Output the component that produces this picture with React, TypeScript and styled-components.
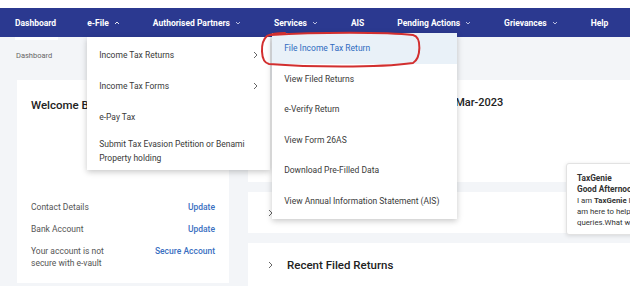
import styled, { createGlobalStyle } from 'styled-components'

const GlobalStyle = createGlobalStyle`
  body {
    margin: 0;
    font-family: Roboto, "Noto Sans", Arial, sans-serif;
    background: #ffffff;
    overflow: hidden;
  }
`

const Page = styled.div`
  position: relative;
  width: 630px;
  height: 286px;
  padding-top: 8px;
  box-sizing: border-box;
  overflow: hidden;
  background: #ffffff;
`

const Nav = styled.nav`
  display: flex;
  align-items: center;
  height: 29px;
  padding-left: 15px;
  gap: 33px;
  background: #2b3990;
`

const NavItem = styled.div<{ $active?: boolean; $tight?: boolean }>`
  position: relative;
  display: flex;
  align-items: center;
  height: 100%;
  margin-right: ${(p) => (p.$tight ? -2 : 0)}px;
  color: #ffffff;
  font-size: 8.5px;
  font-weight: 700;
  white-space: nowrap;

  &::after {
    content: '';
    display: ${(p) => (p.$active ? 'block' : 'none')};
    position: absolute;
    left: 0;
    right: -2px;
    bottom: -3px;
    height: 3px;
    background: #ffffff;
  }
`

const Caret = styled.svg`
  width: 6px;
  height: 4px;
  margin-left: 5px;
`

const Main = styled.main`
  height: 249px;
  padding-left: 17px;
  background: #f3f5f8;
`

const Breadcrumb = styled.div`
  padding-top: 14px;
  line-height: 10px;
  font-size: 7.5px;
  color: #666666;
  margin-left: -1px;
`

const Content = styled.div`
  display: grid;
  grid-template-columns: 212px 1fr;
  column-gap: 19px;
  margin-top: 19px;
`

const LeftCard = styled.section`
  display: flex;
  flex-direction: column;
  height: 203px;
  padding: 18px 14px 14px;
  box-sizing: border-box;
  background: #ffffff;
`

const Welcome = styled.h2`
  margin: 0;
  font-size: 11.5px;
  line-height: 14px;
  font-weight: 500;
  color: #222222;
`

const InfoList = styled.div`
  display: flex;
  flex-direction: column;
  gap: 10px;
  margin-top: auto;
`

const InfoRow = styled.div`
  display: flex;
  justify-content: space-between;
  font-size: 8.5px;
  line-height: 12px;
  color: #555555;
`

const InfoLabel = styled.span`
  max-width: 90px;
`

const InfoLink = styled.span`
  color: #3a6fc1;
  font-weight: 500;
`

const RightCol = styled.div`
  display: flex;
  flex-direction: column;
  gap: 10px;
`

const TopCard = styled.section`
  height: 102px;
  background: #ffffff;
  padding-top: 16px;
  box-sizing: border-box;
`

const LoginInfo = styled.div`
  margin-left: 134px;
  font-size: 11px;
  line-height: 14px;
  font-weight: 500;
  color: #222222;
`

const Card = styled.section<{ $grow?: boolean }>`
  flex: ${(p) => (p.$grow ? 1 : 'none')};
  background: #ffffff;
`

const CardHeader = styled.div<{ $h: number }>`
  display: flex;
  align-items: center;
  height: ${(p) => p.$h}px;
  padding-left: 20px;
`

const CardTitle = styled.h3`
  margin: 0 0 0 14px;
  font-size: 11.5px;
  font-weight: 500;
  color: #222222;
`

const Chevron = styled.svg`
  width: 5px;
  height: 8px;
`

const Dropdown = styled.div`
  position: absolute;
  top: 100%;
  left: 0;
  z-index: 5;
  width: 183px;
  padding: 2px 0 1px;
  background: #ffffff;
  box-shadow: 0 2px 6px rgba(0, 0, 0, 0.22);
  color: #3a3a3a;
  font-size: 8.5px;
  font-weight: 400;
`

const DropItem = styled.div<{ $tall?: boolean }>`
  display: flex;
  align-items: center;
  justify-content: space-between;
  height: ${(p) => (p.$tall ? 37 : 31)}px;
  padding: 0 12px;
  line-height: 14px;
  white-space: normal;
`

const SubMenu = styled.div`
  position: absolute;
  top: -4px;
  left: calc(100% + 2px);
  width: 185px;
  padding-bottom: 3px;
  background: #ffffff;
  box-shadow: 0 2px 6px rgba(0, 0, 0, 0.22);
`

const SubItem = styled.div<{ $active?: boolean }>`
  display: flex;
  align-items: center;
  height: 30.5px;
  padding: 0 12px;
  color: ${(p) => (p.$active ? '#2f6bbf' : '#3a3a3a')};
  background: ${(p) => (p.$active ? '#e9f1f8' : '#ffffff')};
  white-space: nowrap;
`

const Annotation = styled.svg`
  position: absolute;
  left: 257px;
  top: 30px;
  width: 170px;
  height: 40px;
  z-index: 6;
  pointer-events: none;
`

const Genie = styled.div`
  position: absolute;
  left: 566px;
  top: 163px;
  width: 150px;
  height: 72px;
  padding: 9px 10px;
  box-sizing: border-box;
  background: #ffffff;
  border: 1px solid #e2e2e2;
  border-radius: 3px;
  box-shadow: 0 1px 4px rgba(0, 0, 0, 0.12);
  font-size: 7.8px;
  line-height: 11px;
  color: #333333;
  white-space: nowrap;
`

const GenieTitle = styled.div`
  font-size: 8.3px;
  font-weight: 700;
`

const caretDown = (
  <Caret viewBox="0 0 6 4">
    <path d="M1 1 L3 3 L5 1" fill="none" stroke="#c9cde8" strokeWidth="0.9" />
  </Caret>
)

const caretUp = (
  <Caret viewBox="0 0 6 4">
    <path d="M1 3 L3 1 L5 3" fill="none" stroke="#ffffff" strokeWidth="0.9" />
  </Caret>
)

const chevronRight = (
  <Chevron viewBox="0 0 5 8">
    <path d="M1 1 L4 4 L1 7" fill="none" stroke="#555555" strokeWidth="0.9" />
  </Chevron>
)

const subItems = [
  'File Income Tax Return',
  'View Filed Returns',
  'e-Verify Return',
  'View Form 26AS',
  'Download Pre-Filled Data',
  'View Annual Information Statement (AIS)',
]

export default function App() {
  return (
    <Page>
      <GlobalStyle />
      <Nav>
        <NavItem $active $tight>
          Dashboard
        </NavItem>
        <NavItem $active>
          e-File {caretUp}
          <Dropdown>
            <DropItem>
              Income Tax Returns {chevronRight}
              <SubMenu>
                {subItems.map((s, i) => (
                  <SubItem key={s} $active={i === 0}>
                    {s}
                  </SubItem>
                ))}
              </SubMenu>
            </DropItem>
            <DropItem>Income Tax Forms {chevronRight}</DropItem>
            <DropItem>e-Pay Tax</DropItem>
            <DropItem $tall>Submit Tax Evasion Petition or Benami Property holding</DropItem>
          </Dropdown>
        </NavItem>
        <NavItem>Authorised Partners {caretDown}</NavItem>
        <NavItem>Services {caretDown}</NavItem>
        <NavItem>AIS</NavItem>
        <NavItem>Pending Actions {caretDown}</NavItem>
        <NavItem>Grievances {caretDown}</NavItem>
        <NavItem>Help</NavItem>
      </Nav>

      <Main>
        <Breadcrumb>Dashboard</Breadcrumb>
        <Content>
          <LeftCard>
            <Welcome>Welcome Back</Welcome>
            <InfoList>
              <InfoRow>
                <InfoLabel>Contact Details</InfoLabel>
                <InfoLink>Update</InfoLink>
              </InfoRow>
              <InfoRow>
                <InfoLabel>Bank Account</InfoLabel>
                <InfoLink>Update</InfoLink>
              </InfoRow>
              <InfoRow>
                <InfoLabel>Your account is not secure with e-vault</InfoLabel>
                <InfoLink>Secure Account</InfoLink>
              </InfoRow>
            </InfoList>
          </LeftCard>

          <RightCol>
            <TopCard>
              <LoginInfo>Last Login: 13-Mar-2023</LoginInfo>
            </TopCard>
            <Card>
              <CardHeader $h={41}>
                {chevronRight}
                <CardTitle>Tax Deposit</CardTitle>
              </CardHeader>
            </Card>
            <Card $grow>
              <CardHeader $h={44}>
                {chevronRight}
                <CardTitle>Recent Filed Returns</CardTitle>
              </CardHeader>
            </Card>
          </RightCol>
        </Content>
      </Main>

      <Annotation viewBox="0 0 170 40">
        <path
          d="M14 5 C60 2 130 2 156 5 C165 7 164 28 156 33 C120 38 50 37 12 34 C3 32 3 12 10 6 C14 4 20 3 28 3"
          fill="none"
          stroke="#d22f2f"
          strokeWidth="2"
          strokeLinecap="round"
        />
      </Annotation>

      <Genie>
        <GenieTitle>TaxGenie</GenieTitle>
        <GenieTitle>Good Afternoon</GenieTitle>
        <div>
          I am <b>TaxGenie</b> I will guide you.
        </div>
        <div>am here to help you with your</div>
        <div>queries.What would you like to do?</div>
      </Genie>
    </Page>
  )
}
